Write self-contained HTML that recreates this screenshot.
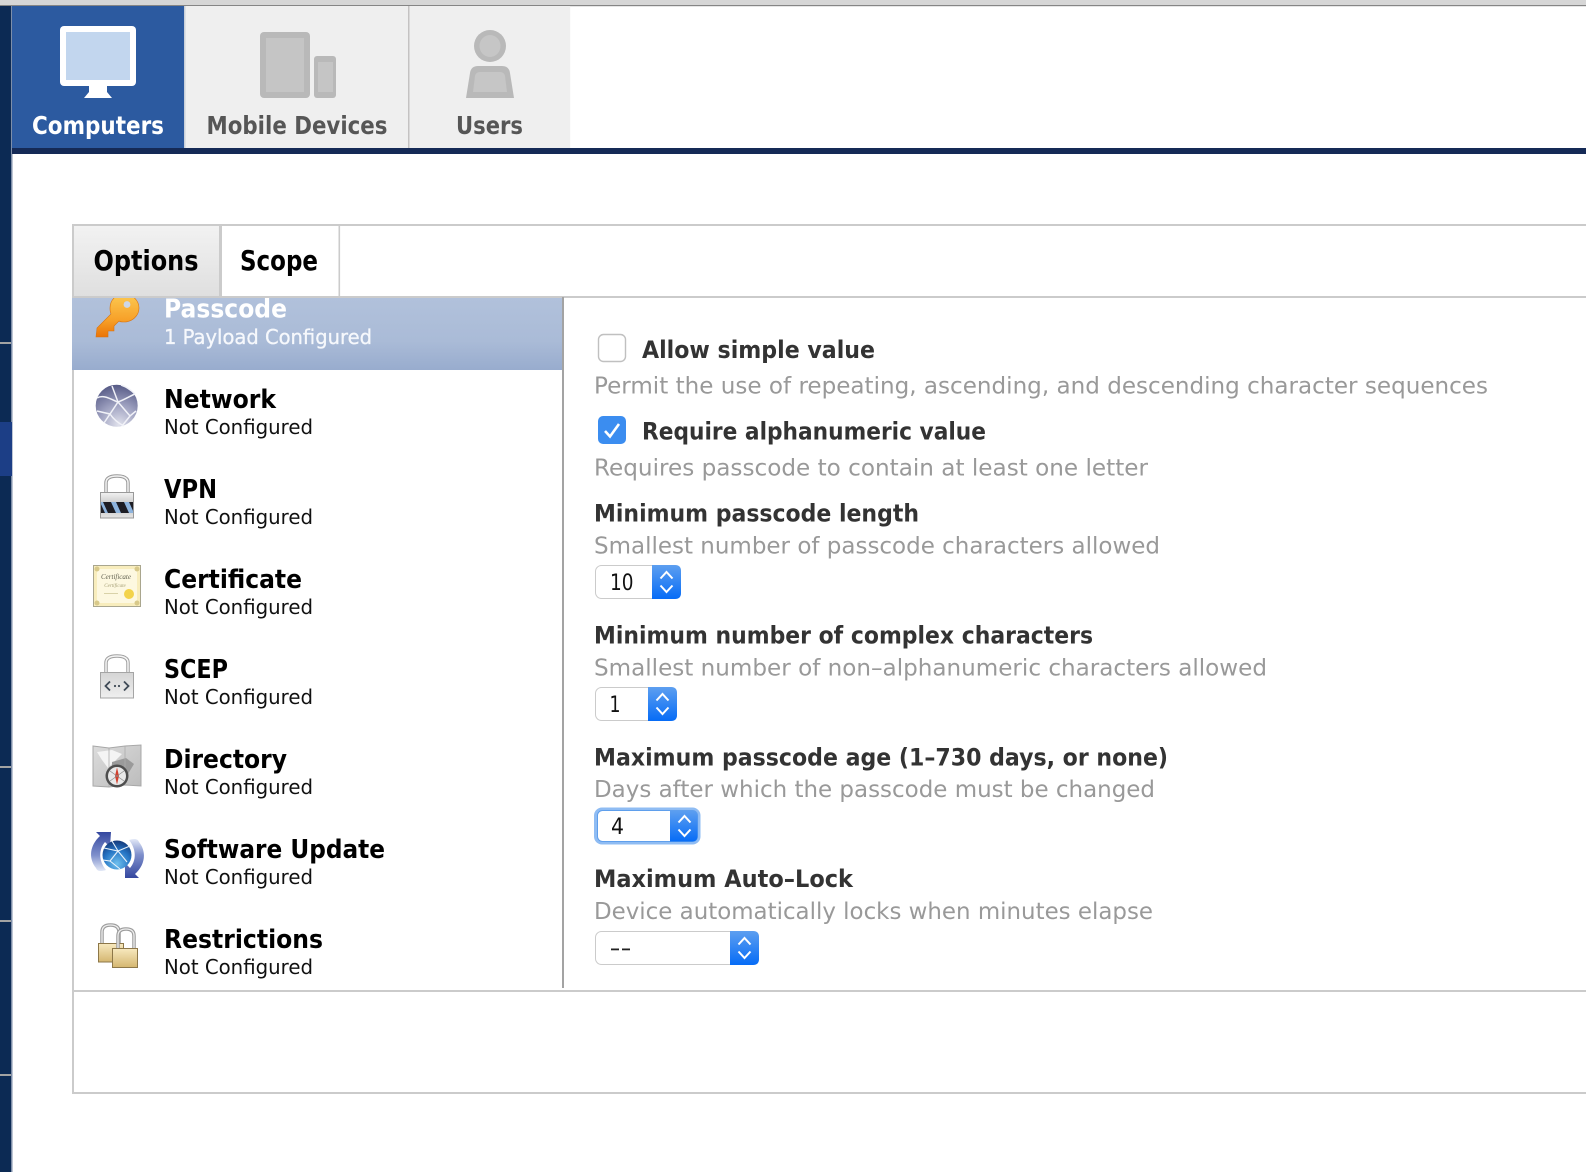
<!DOCTYPE html>
<html lang="en">
<head>
<meta charset="utf-8">
<title>Passcode Configuration</title>
<style>
html,body{margin:0;padding:0;background:#fff;width:1586px;height:1172px;overflow:hidden}
svg{display:block}
text{font-family:"DejaVu Sans","Liberation Sans",sans-serif}
.tab{font-size:24.5px;font-weight:bold}
.st{font-size:27.5px;font-weight:bold;fill:#000}
.t{font-size:25.5px;font-weight:bold;fill:#000}
.s{font-size:20.5px;fill:#111}
.h{font-size:24px;font-weight:bold;fill:#333}
.d{font-size:23px;fill:#999}
.v{font-size:22px;fill:#111}
</style>
</head>
<body>
<svg xmlns="http://www.w3.org/2000/svg" width="1586" height="1172" viewBox="0 0 1586 1172">
<defs>
<linearGradient id="opt" x1="0" y1="0" x2="0" y2="1"><stop offset="0" stop-color="#f2f2f2"/><stop offset="1" stop-color="#dfdfdf"/></linearGradient>
<linearGradient id="sel" x1="0" y1="0" x2="0" y2="1"><stop offset="0" stop-color="#b1c1db"/><stop offset=".6" stop-color="#aabbd7"/><stop offset="1" stop-color="#98acce"/></linearGradient>
<linearGradient id="blue" x1="0" y1="0" x2="0" y2="1"><stop offset="0" stop-color="#5d9ff0"/><stop offset="1" stop-color="#066cf6"/></linearGradient>
<linearGradient id="key" gradientUnits="userSpaceOnUse" x1="0" y1="295" x2="0" y2="337"><stop offset="0" stop-color="#fcc850"/><stop offset=".6" stop-color="#f7a028"/><stop offset="1" stop-color="#ea7408"/></linearGradient>
<radialGradient id="globe" cx=".55" cy=".95" r="1"><stop offset="0" stop-color="#e0e1ec"/><stop offset=".5" stop-color="#9a9dbd"/><stop offset="1" stop-color="#4f5380"/></radialGradient>
<radialGradient id="globe2" cx=".5" cy=".8" r=".85"><stop offset="0" stop-color="#6fc0ee"/><stop offset=".55" stop-color="#2574c4"/><stop offset="1" stop-color="#12306f"/></radialGradient>
<linearGradient id="silver" x1="0" y1="0" x2="0" y2="1"><stop offset="0" stop-color="#f2f2f2"/><stop offset=".5" stop-color="#c4c4c4"/><stop offset="1" stop-color="#e4e4e4"/></linearGradient>
<linearGradient id="lgray" x1="0" y1="0" x2="0" y2="1"><stop offset="0" stop-color="#d5d5d5"/><stop offset="1" stop-color="#efefef"/></linearGradient>
<linearGradient id="gold" x1="0" y1="0" x2="0" y2="1"><stop offset="0" stop-color="#f8e9bf"/><stop offset="1" stop-color="#d4b670"/></linearGradient>
<linearGradient id="map" x1="0" y1="0" x2="1" y2="1"><stop offset="0" stop-color="#dcdcdc"/><stop offset="1" stop-color="#bcbcbc"/></linearGradient>
<linearGradient id="arcL" x1="0" y1="0" x2="0" y2="1"><stop offset="0" stop-color="#34479f"/><stop offset=".6" stop-color="#7f90cc"/><stop offset="1" stop-color="#e3e9f7"/></linearGradient>
<linearGradient id="arcR" x1="0" y1="1" x2="0" y2="0"><stop offset="0" stop-color="#34479f"/><stop offset=".6" stop-color="#7f90cc"/><stop offset="1" stop-color="#e3e9f7"/></linearGradient>
<clipPath id="rowclip"><rect x="72" y="298" width="492" height="72"/></clipPath>
<clipPath id="stripes"><rect x="101" y="502" width="32" height="11"/></clipPath>
</defs>

<!-- page chrome -->
<rect width="1586" height="5" fill="#d6d6d6"/>
<rect y="5" width="1586" height="1.2" fill="#858585"/>
<rect y="6" width="11" height="1166" fill="#0c2a54"/>
<rect x="11" y="6" width="1.5" height="1166" fill="#7e8ea8"/>
<rect y="342" width="11" height="2" fill="#a3a3a3"/>
<rect y="422" width="12" height="54" fill="#1c3e86"/>
<rect y="766" width="11" height="2" fill="#a3a3a3"/>
<rect y="920" width="11" height="2" fill="#a3a3a3"/>
<rect y="1074" width="11" height="2" fill="#a3a3a3"/>

<!-- top nav -->
<rect x="12" y="6" width="172.500" height="142" fill="#2c5aa0"/>
<rect x="184.500" y="6" width="224" height="142" fill="#efefef"/>
<rect x="408" y="6" width="1.600" height="142" fill="#c4c2c2"/>
<rect x="409.600" y="6" width="160.600" height="142" fill="#efefef"/>
<rect x="184" y="6" width="1.500" height="142" fill="#c9d0da"/>
<rect x="12" y="148" width="1574" height="6" fill="#152a56"/>

<!-- monitor -->
<rect x="60" y="26" width="76" height="60" rx="4" fill="#fff"/>
<rect x="66" y="32" width="64" height="48" fill="#c2d6ee"/>
<path d="M89 86H107V92L112 98H84L89 92Z" fill="#fff"/>
<!-- mobile devices -->
<rect x="260" y="32" width="50" height="66" rx="4" fill="#b9b9b9"/>
<rect x="266" y="38" width="38" height="54" fill="#c5c5c5"/>
<rect x="314" y="56" width="22" height="42" rx="3" fill="#b9b9b9"/>
<rect x="318" y="62" width="15" height="30" fill="#c5c5c5"/>
<!-- user -->
<ellipse cx="490" cy="46" rx="16" ry="16" fill="#b9b9b9"/>
<ellipse cx="490" cy="46" rx="10.500" ry="11" fill="#c6c6c6"/>
<path d="M466 98L470 73Q471 66 478 66H502Q509 66 510 73L514 98Z" fill="#b9b9b9"/>
<path d="M473 92L475 76Q476 72 480 72H500Q504 72 505 76L507 92Z" fill="#c6c6c6"/>

<text class="tab" x="32" y="134" fill="#fff" textLength="132" lengthAdjust="spacingAndGlyphs">Computers</text>
<text class="tab" x="206.500" y="134" fill="#565656" textLength="181" lengthAdjust="spacingAndGlyphs">Mobile Devices</text>
<text class="tab" x="456" y="134" fill="#565656" textLength="67" lengthAdjust="spacingAndGlyphs">Users</text>

<!-- panel frame -->
<rect x="72" y="224" width="1514" height="2" fill="#cbcbcb"/>
<rect x="72" y="296" width="1514" height="2" fill="#cbcbcb"/>
<rect x="72" y="224" width="2" height="870" fill="#cbcbcb"/>
<rect x="72" y="990" width="1514" height="2" fill="#cbcbcb"/>
<rect x="72" y="1092" width="1514" height="2" fill="#cbcbcb"/>
<rect x="74" y="226" width="145" height="70" fill="url(#opt)"/>
<rect x="219" y="226" width="3" height="70" fill="#cbcbcb"/>
<rect x="338.500" y="226" width="1.600" height="70" fill="#cbcbcb"/>
<text class="st" x="93.500" y="270" textLength="105" lengthAdjust="spacingAndGlyphs">Options</text>
<text class="st" x="240" y="270" textLength="78" lengthAdjust="spacingAndGlyphs">Scope</text>

<!-- sidebar selected row -->
<rect x="72" y="298" width="490" height="72" fill="url(#sel)"/>
<rect x="562" y="297" width="2" height="691" fill="#a3a3a3"/>

<g clip-path="url(#rowclip)">
<path d="M124 294C132 294 139 300 139 308C139 316 132 322 124 322C122 322 120 322 119 321L114 326V331H108V337H96L97 328L111 314C110 312 110 310 110 308C110 300 116 294 124 294Z" fill="url(#key)" stroke="#d9730f" stroke-width=".6"/>
<circle cx="127" cy="304.500" r="3.400" fill="#cdd7e8"/>
<text x="164" y="317.500" font-size="25.500" font-weight="bold" fill="#fff" textLength="123" lengthAdjust="spacingAndGlyphs">Passcode</text>
</g>
<text x="164" y="344" font-size="20.500" fill="#f6f8fc" stroke="#f6f8fc" stroke-width=".3" textLength="208" lengthAdjust="spacingAndGlyphs">1 Payload Configured</text>

<!-- Network -->
<circle cx="116.700" cy="405.700" r="21" fill="url(#globe)"/>
<g fill="none" stroke="#f1f2f8" stroke-width="1.500">
<path d="M97 398C104 394 112 400 118 402C124 400 130 396 135 394"/><path d="M118 402L110 414L97 411"/><path d="M110 414C114 420 120 424 124 426"/><path d="M118 402L130 416L136 411"/><path d="M112 386L118 402"/><path d="M110 414L104 423"/><path d="M121 385C127 387 132 391 135 394"/><path d="M130 416L122 426"/>
</g>
<text class="t" x="164" y="408" textLength="112" lengthAdjust="spacingAndGlyphs">Network</text>
<text class="s" x="164" y="434" textLength="149" lengthAdjust="spacingAndGlyphs">Not Configured</text>

<!-- VPN -->
<path d="M106 493V483Q106 476 117 476Q128 476 128 483V493" fill="none" stroke="#9a9a9a" stroke-width="3.500"/>
<path d="M106 493V483Q106 476 117 476Q128 476 128 483V493" fill="none" stroke="#f2f2f2" stroke-width="1.500"/>
<rect x="100.500" y="492.500" width="33" height="25.500" fill="url(#silver)" stroke="#999"/>
<rect x="101" y="502" width="32" height="11" fill="#1d1d24"/>
<g clip-path="url(#stripes)" fill="#8db3dd">
<path d="M100 502h3l5 11h-3z"/><path d="M111 502h5l5 11h-5z"/><path d="M124 502h5l5 11h-5z"/>
</g>
<text class="t" x="164" y="498" textLength="53" lengthAdjust="spacingAndGlyphs">VPN</text>
<text class="s" x="164" y="524" textLength="149" lengthAdjust="spacingAndGlyphs">Not Configured</text>

<!-- Certificate -->
<rect x="93.500" y="565.500" width="47" height="41" fill="#f8edbd" stroke="#a9a68e"/>
<rect x="97" y="569" width="40" height="34" fill="#fdf8e0"/>
<g fill="#d8c98a"><circle cx="97" cy="569" r="2.500"/><circle cx="137" cy="569" r="2.500"/><circle cx="97" cy="603" r="2.500"/><circle cx="137" cy="603" r="2.500"/></g>
<text x="116" y="579" font-size="7" font-style="italic" text-anchor="middle" fill="#5f5f4e" style="font-family:'Liberation Serif',serif">Certificate</text>
<text x="115" y="587" font-size="5" font-style="italic" text-anchor="middle" fill="#a59f75" style="font-family:'Liberation Serif',serif">Certificate</text>
<rect x="104" y="593" width="14" height="1" fill="#d9d2a8"/>
<circle cx="129" cy="594" r="5" fill="#f3d34a"/>
<text class="t" x="164" y="588" textLength="138" lengthAdjust="spacingAndGlyphs">Certificate</text>
<text class="s" x="164" y="614" textLength="149" lengthAdjust="spacingAndGlyphs">Not Configured</text>

<!-- SCEP -->
<path d="M106 673V663Q106 656 117 656Q128 656 128 663V673" fill="none" stroke="#a0a0a0" stroke-width="3.500"/>
<path d="M106 673V663Q106 656 117 656Q128 656 128 663V673" fill="none" stroke="#f5f5f5" stroke-width="1.500"/>
<rect x="100.500" y="672.500" width="33" height="25.500" fill="url(#lgray)" stroke="#a5a5a5"/>
<path d="M110 681.500L105.500 686L110 690.500M124 681.500L128.500 686L124 690.500" fill="none" stroke="#3f4a56" stroke-width="1.800"/>
<circle cx="115" cy="686" r="1.100" fill="#3f4a56"/><circle cx="119" cy="686" r="1.100" fill="#3f4a56"/>
<text class="t" x="164" y="678" textLength="64" lengthAdjust="spacingAndGlyphs">SCEP</text>
<text class="s" x="164" y="704" textLength="149" lengthAdjust="spacingAndGlyphs">Not Configured</text>

<!-- Directory -->
<path d="M93 746L109 748L125 746L141 745V786L125 785L109 787L93 786Z" fill="url(#map)" stroke="#a8a8a8"/>
<path d="M97 752L112 750L122 754L116 760L108 768L102 760Z" fill="#f4f4f4"/>
<path d="M112 762L126 758L134 764L128 774L112 770Z" fill="#9a9a9a"/>
<path d="M109 748V787M125 746V785" stroke="#acacac" stroke-width=".8"/>
<circle cx="117" cy="776" r="11.500" fill="#4e4e4e"/>
<circle cx="117" cy="776" r="9" fill="#e9e9e9"/>
<path d="M117 767.500L119 776L117 784.500L115 776Z" fill="#d3402d"/>
<path d="M110 771L124 781M124 771L110 781" stroke="#8a8a8a" stroke-width=".7"/>
<text class="t" x="164" y="768" textLength="123" lengthAdjust="spacingAndGlyphs">Directory</text>
<text class="s" x="164" y="794" textLength="149" lengthAdjust="spacingAndGlyphs">Not Configured</text>

<!-- Software Update -->
<path d="M111 832L110 847L105 842C99 849 98 860 106 870C100 872 97 871 96 868C88 858 90 845 100 836L96 832Z" fill="url(#arcL)"/>
<path d="M125 878L125 863L130 868C136 861 137 850 129 840C135 838 138 839 139 842C147 852 145 865 135 874L139 878Z" fill="url(#arcR)"/>
<circle cx="117" cy="855" r="14.500" fill="url(#globe2)"/>
<g fill="none" stroke="#e8f2fb" stroke-width="1.100">
<path d="M104 848L118 851L130 846"/><path d="M118 851L110 861L103 860"/><path d="M110 861L120 869"/><path d="M118 851L127 862"/><path d="M112 841L118 851"/>
</g>
<text class="t" x="164" y="858" textLength="221" lengthAdjust="spacingAndGlyphs">Software Update</text>
<text class="s" x="164" y="884" textLength="149" lengthAdjust="spacingAndGlyphs">Not Configured</text>

<!-- Restrictions -->
<path d="M102 943V932Q102 925 110.500 925Q119 925 119 932V943" fill="none" stroke="#9c9c9c" stroke-width="3.500"/>
<path d="M102 943V932Q102 925 110.500 925Q119 925 119 932V943" fill="none" stroke="#eee" stroke-width="1.300"/>
<rect x="98.500" y="943.500" width="25" height="18.500" fill="url(#gold)" stroke="#8d7748"/>
<path d="M118 948V936Q118 929 126 929Q134 929 134 936V948" fill="none" stroke="#9c9c9c" stroke-width="3.500"/>
<path d="M118 948V936Q118 929 126 929Q134 929 134 936V948" fill="none" stroke="#eee" stroke-width="1.300"/>
<rect x="112.500" y="948.500" width="25" height="19" fill="url(#gold)" stroke="#8d7748"/>
<text class="t" x="164" y="948" textLength="159" lengthAdjust="spacingAndGlyphs">Restrictions</text>
<text class="s" x="164" y="974" textLength="149" lengthAdjust="spacingAndGlyphs">Not Configured</text>

<!-- form -->
<rect x="598.500" y="334.500" width="27" height="27" rx="5" fill="#fff" stroke="#c0c0c0" stroke-width="1.400"/>
<text class="h" x="642" y="358" textLength="233" lengthAdjust="spacingAndGlyphs">Allow simple value</text>
<text class="d" x="594" y="393.500" textLength="894" lengthAdjust="spacingAndGlyphs">Permit the use of repeating, ascending, and descending character sequences</text>

<rect x="598" y="416" width="28" height="28" rx="5" fill="#3b8df0"/>
<path d="M605 431L610 436.500L619 424" fill="none" stroke="#fff" stroke-width="2.600"/>
<text class="h" x="642" y="439.500" textLength="344" lengthAdjust="spacingAndGlyphs">Require alphanumeric value</text>
<text class="d" x="594" y="475.500" textLength="554" lengthAdjust="spacingAndGlyphs">Requires passcode to contain at least one letter</text>

<text class="h" x="594" y="521.500" textLength="325" lengthAdjust="spacingAndGlyphs">Minimum passcode length</text>
<text class="d" x="594" y="553.500" textLength="566" lengthAdjust="spacingAndGlyphs">Smallest number of passcode characters allowed</text>
<!-- stepper 1 -->
<rect x="595.500" y="565.500" width="85" height="33" rx="6" fill="#fff" stroke="#cbcbcb"/>
<path d="M652 565H675Q681 565 681 571V593Q681 599 675 599H652Z" fill="url(#blue)"/>
<path d="M660.500 578.500L666.500 572L672.500 578.500M660.500 585.500L666.500 592L672.500 585.500" fill="none" stroke="#fff" stroke-width="2"/>
<text class="v" x="610" y="590" textLength="23.500" lengthAdjust="spacingAndGlyphs">10</text>

<text class="h" x="594" y="643.500" textLength="499" lengthAdjust="spacingAndGlyphs">Minimum number of complex characters</text>
<text class="d" x="594" y="675.500" textLength="673" lengthAdjust="spacingAndGlyphs">Smallest number of non–alphanumeric characters allowed</text>
<!-- stepper 2 -->
<rect x="595.500" y="687.500" width="81" height="33" rx="6" fill="#fff" stroke="#cbcbcb"/>
<path d="M648 687H671Q677 687 677 693V715Q677 721 671 721H648Z" fill="url(#blue)"/>
<path d="M656.500 700.500L662.500 694L668.500 700.500M656.500 707.500L662.500 714L668.500 707.500" fill="none" stroke="#fff" stroke-width="2"/>
<text class="v" x="609.500" y="712" textLength="11" lengthAdjust="spacingAndGlyphs">1</text>

<text class="h" x="594" y="765.500" textLength="574" lengthAdjust="spacingAndGlyphs">Maximum passcode age (1–730 days, or none)</text>
<text class="d" x="594" y="797" textLength="561" lengthAdjust="spacingAndGlyphs">Days after which the passcode must be changed</text>
<!-- stepper 3 focused -->
<rect x="594" y="807.500" width="106.500" height="37" rx="8" fill="#8fbcf3"/>
<rect x="597.500" y="810.500" width="100" height="31" rx="5" fill="#fff" stroke="#5f9fec"/>
<path d="M670 810.500H692Q697.500 810.500 697.500 816V836Q697.500 841.500 692 841.500H670Z" fill="url(#blue)"/>
<path d="M678.500 822.500L684.500 816L690.500 822.500M678.500 829.500L684.500 836L690.500 829.500" fill="none" stroke="#fff" stroke-width="2"/>
<text class="v" x="611" y="834" textLength="13" lengthAdjust="spacingAndGlyphs">4</text>

<text class="h" x="594" y="887" textLength="259" lengthAdjust="spacingAndGlyphs">Maximum Auto–Lock</text>
<text class="d" x="594" y="919" textLength="559" lengthAdjust="spacingAndGlyphs">Device automatically locks when minutes elapse</text>
<!-- stepper 4 -->
<rect x="595.500" y="931.500" width="163" height="33" rx="6" fill="#fff" stroke="#cbcbcb"/>
<path d="M730 931H753Q759 931 759 937V959Q759 965 753 965H730Z" fill="url(#blue)"/>
<path d="M738.500 944.500L744.500 938L750.500 944.500M738.500 951.500L744.500 958L750.500 951.500" fill="none" stroke="#fff" stroke-width="2"/>
<rect x="611" y="948.500" width="8" height="1.800" fill="#222"/>
<rect x="622" y="948.500" width="8" height="1.800" fill="#222"/>
</svg>
</body>
</html>
